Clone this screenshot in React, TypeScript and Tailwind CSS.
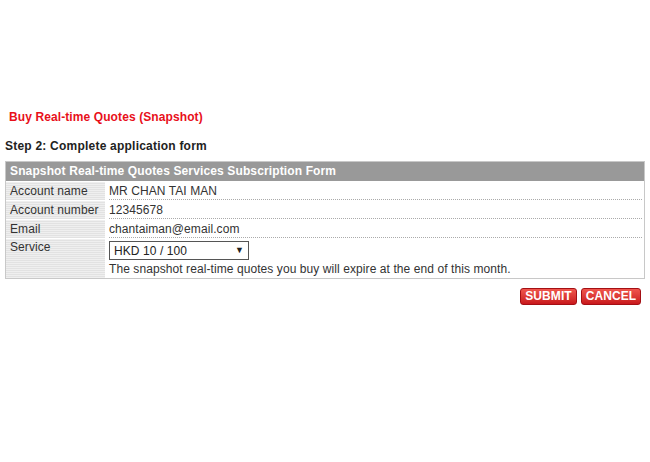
import React from 'react';

const rows = [
  { label: 'Account name', value: 'MR CHAN TAI MAN' },
  { label: 'Account number', value: '12345678' },
  { label: 'Email', value: 'chantaiman@email.com' },
];

const stripe =
  'bg-[repeating-linear-gradient(to_bottom,#efefef_0px,#efefef_1px,#e2e2e2_1px,#e2e2e2_2px)]';

export default function App() {
  return (
    <div className="w-[650px] h-[462px] bg-white font-['Liberation_Sans',Arial,sans-serif] text-[12px] tracking-[0.08px] text-[#333]">
      <div className="pt-[110px] px-[5px]">
        <h1 className="pl-[4px] text-[12px] leading-[14px] font-bold tracking-[0.1px] text-[#e8101a]">
          Buy Real-time Quotes (Snapshot)
        </h1>
        <h2 className="mt-[15px] text-[12px] leading-[14px] font-bold tracking-[0.22px] text-[#222]">
          Step 2: Complete application form
        </h2>

        <div className="mt-[8px] border border-[#c8c8c8]">
          <div className="h-[19px] bg-[#999] px-[4px] text-white font-bold tracking-[0.13px] leading-[19px]">
            Snapshot Real-time Quotes Services Subscription Form
          </div>
          {rows.map((r) => (
            <div key={r.label} className="flex h-[19px] border-t border-white">
              <div className={`w-[99px] shrink-0 px-[4px] leading-[18px] ${stripe}`}>{r.label}</div>
              <div className="flex-1 ml-[4px] mr-[2px] leading-[18px] border-b border-dotted border-[#aaa]">
                {r.value}
              </div>
            </div>
          ))}
          <div className="flex border-t border-white">
            <div className={`w-[99px] shrink-0 px-[4px] leading-[16px] ${stripe}`}>Service</div>
            <div className="flex-1 ml-[4px] pt-[2px] pb-[1px]">
              <div className="flex items-center justify-between w-[140px] h-[19px] border border-[#555] bg-white pl-[4px] pr-[4px] text-[12px] text-[#222]">
                <span>HKD 10 / 100</span>
                <span className="text-[9px]">▼</span>
              </div>
              <div className="mt-[1px] leading-[16px]">
                The snapshot real-time quotes you buy will expire at the end of this month.
              </div>
            </div>
          </div>
        </div>

        <div className="mt-[9px] flex justify-end gap-[4px] pr-[4px]">
          <button className="h-[17px] w-[57px] rounded-[3px] border border-[#a40f14] bg-gradient-to-b from-[#f0554c] to-[#c9161c] text-white font-bold text-[12px] leading-[15px]">
            SUBMIT
          </button>
          <button className="h-[17px] w-[60px] rounded-[3px] border border-[#a40f14] bg-gradient-to-b from-[#f0554c] to-[#c9161c] text-white font-bold text-[12px] leading-[15px]">
            CANCEL
          </button>
        </div>
      </div>
    </div>
  );
}
